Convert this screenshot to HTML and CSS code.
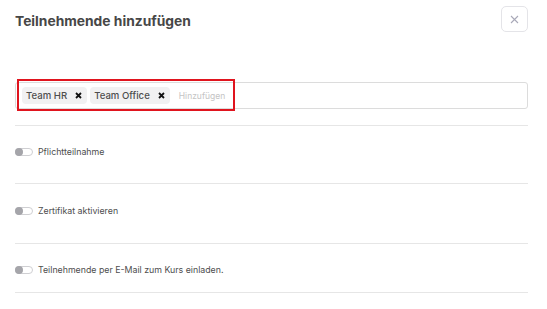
FILE: index.html
```html
<!DOCTYPE html>
<html lang="de">
<head>
<meta charset="utf-8">
<title>Teilnehmende hinzufügen</title>
<link rel="stylesheet" href="styles.css">
</head>
<body>
<div class="dialog">
  <div class="header">
    <h1 class="title">Teilnehmende hinzufügen</h1>
    <button class="close" aria-label="Schließen">
      <svg width="9" height="9" viewBox="0 0 9 9"><path d="M1 1L8 8M8 1L1 8" stroke="#a9a9b8" stroke-width="1.1" fill="none"/></svg>
    </button>
  </div>
  <div class="field">
    <div class="tags">
      <span class="chip">Team HR<svg class="chip-x" width="7" height="7" viewBox="0 0 7 7"><path d="M1 1L6 6M6 1L1 6" stroke="#111" stroke-width="1.8" fill="none"/></svg></span>
      <span class="chip">Team Office<svg class="chip-x" width="7" height="7" viewBox="0 0 7 7"><path d="M1 1L6 6M6 1L1 6" stroke="#111" stroke-width="1.8" fill="none"/></svg></span>
      <span class="placeholder">Hinzufügen</span>
    </div>
    <div class="highlight"></div>
  </div>
  <div class="row row-1"><span class="toggle"><span class="knob"></span></span><span class="label">Pflichtteilnahme</span></div>
  <div class="row row-2"><span class="toggle"><span class="knob"></span></span><span class="label">Zertifikat aktivieren</span></div>
  <div class="row row-3"><span class="toggle"><span class="knob"></span></span><span class="label">Teilnehmende per E-Mail zum Kurs einladen.</span></div>
  <div class="rule"></div>
</div>
</body>
</html>
```
FILE: styles.css
```css
* { box-sizing: border-box; }
html, body { margin: 0; padding: 0; background: #fff; }
body { font-family: Inter, "Noto Sans", "Liberation Sans", sans-serif; color: #555; }
.dialog { padding: 6px 19px 0 15px; }
.header { display: flex; justify-content: space-between; align-items: flex-start; height: 26px; }
.title { margin: 5px 0 0; font-size: 13.8px; line-height: 20px; font-weight: 700; color: #474747; }
.close { width: 27px; height: 26px; border: 1px solid #e4e4e8; border-radius: 5px; background: #fff; padding: 0; display: flex; align-items: center; justify-content: center; }
.field { position: relative; margin-top: 50px; }
.tags { height: 27px; border: 1px solid #dcdcdc; border-radius: 3px; display: flex; align-items: center; padding-left: 6px; gap: 3px; }
.chip { height: 17px; display: inline-flex; align-items: center; background: #f1f1f2; border-radius: 4px; padding: 0 5px 0 4px; font-size: 9.6px; font-weight: 500; color: #4e4e4e; gap: 8px; }
.chip-x { display: block; }
.placeholder { margin-left: 6px; font-size: 8.5px; color: #c4c4c4; }
.highlight { position: absolute; left: 2px; top: -3px; width: 218px; height: 32px; border: 2px solid #e0141e; pointer-events: none; }
.row { display: flex; align-items: center; border-top: 1px solid #e6e6e6; }
.row-1 { margin-top: 16px; padding: 19px 0 24px; }
.row-2 { padding: 20px 0 25px; }
.row-3 { padding: 19px 0 15px; }
.rule { border-top: 1px solid #e6e6e6; }
.toggle { position: relative; width: 18px; height: 8px; border: 1px solid #cfcfd2; border-radius: 4px; background: #fff; flex: none; }
.knob { position: absolute; left: -1px; top: -1px; width: 8px; height: 8px; border-radius: 50%; background: #a5a5aa; }
.label { margin-left: 5px; font-size: 8.8px; line-height: 14px; color: #4e4e4e; }
```
